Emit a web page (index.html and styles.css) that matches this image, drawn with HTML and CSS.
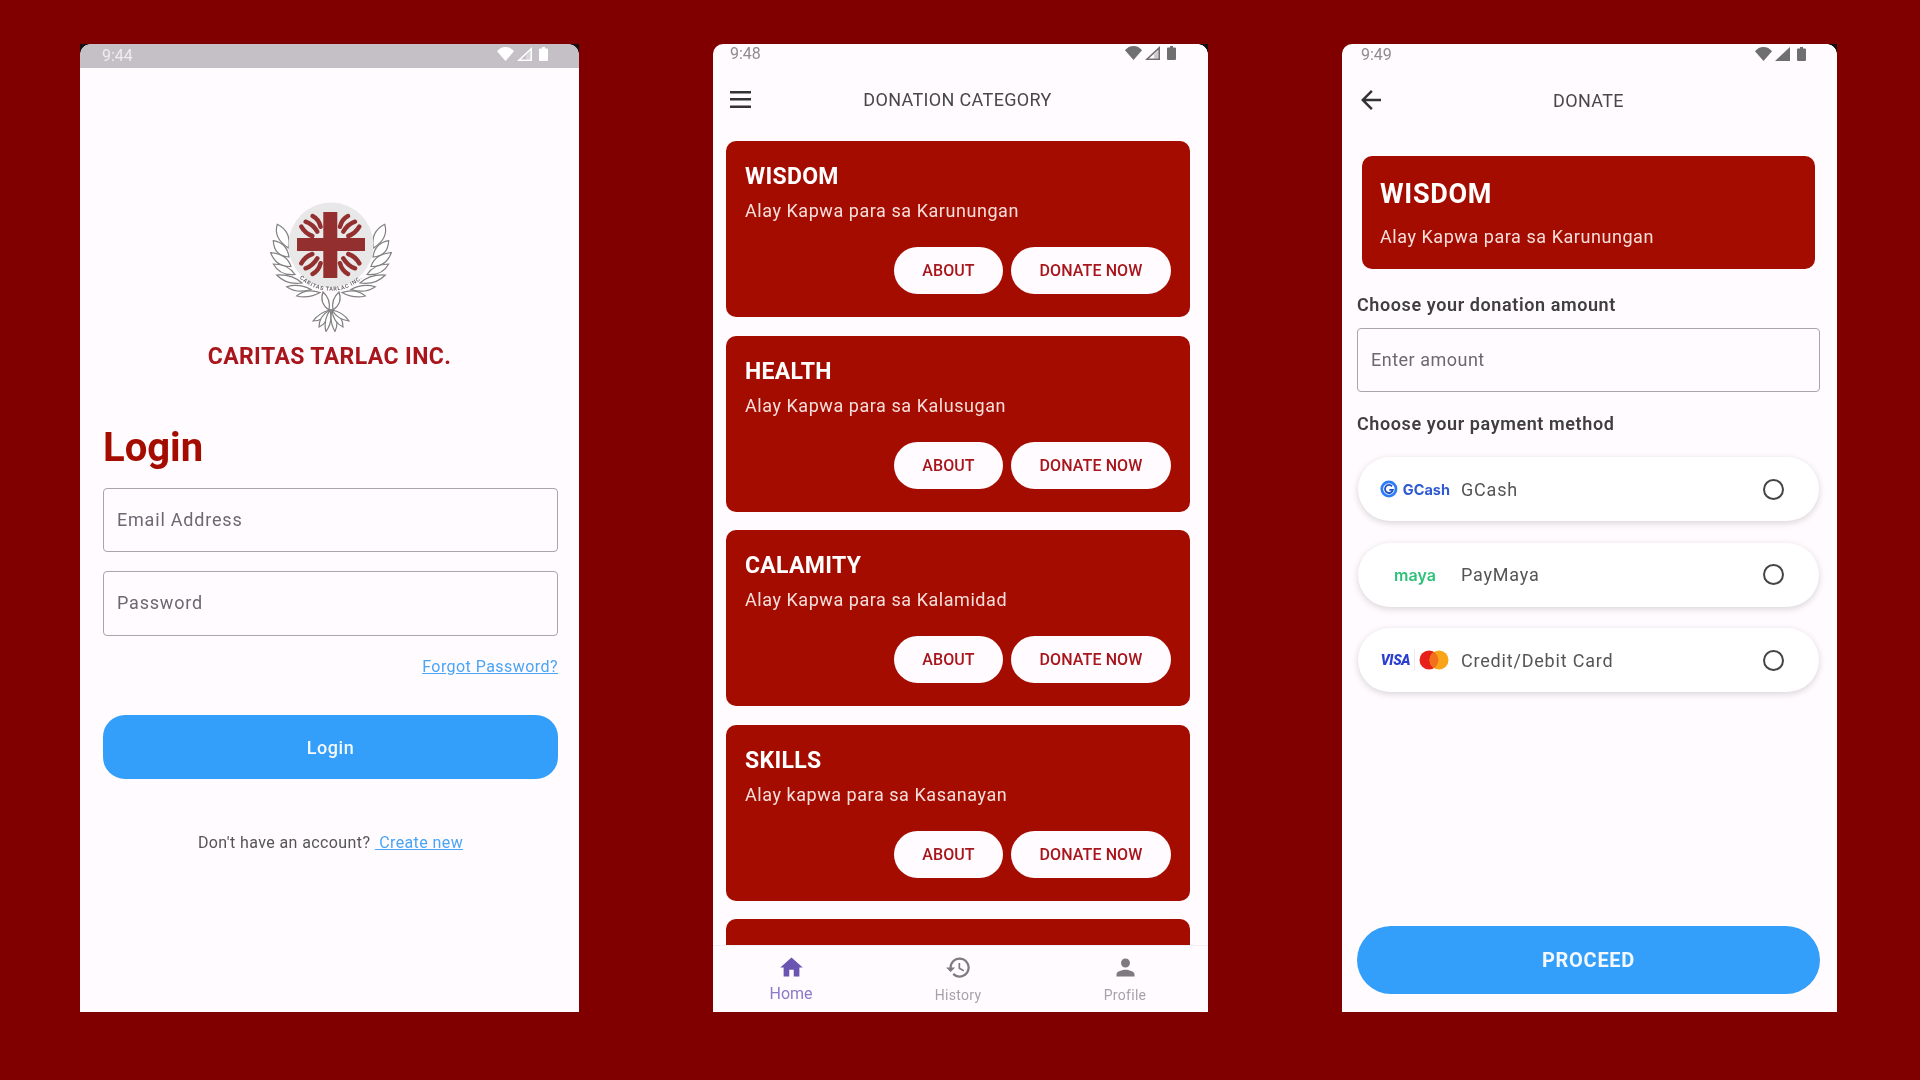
FILE: index.html
```html
<!DOCTYPE html>
<html>
  <head>
    <meta charset="utf-8" />
    <title>Caritas Tarlac</title>
    <link rel="stylesheet" href="styles.css" />
  </head>
  <body>
    <svg class="sprite" width="0" height="0">
      <symbol id="wifi" viewBox="0 0 17 14"><path d="M0 4.2C2.2 1.6 5.2 0 8.5 0s6.3 1.6 8.5 4.2L8.5 14z" /></symbol>
      <symbol id="signal-open" viewBox="0 0 15 14"><path d="M15 0v14H0zM13.4 3.8 3.8 12.6h9.6z" fill-rule="evenodd" /><path d="M9 8.6v4h4.4V4.4z" opacity=".35" /></symbol>
      <symbol id="signal-full" viewBox="0 0 15 14"><path d="M15 0v14H0z" /></symbol>
      <symbol id="battery" viewBox="0 0 9 14"><path d="M3 0h3v1.5h2A1 1 0 0 1 9 2.5V13a1 1 0 0 1-1 1H1a1 1 0 0 1-1-1V2.5a1 1 0 0 1 1-1h2z" /></symbol>
    </svg>

    <div class="phones">
      <!-- Login -->
      <div class="phone login">
        <div class="status status-grey">
          <span>9:44</span>
          <div class="status-icons">
            <svg class="ico-wifi"><use href="#wifi" /></svg>
            <svg class="ico-signal"><use href="#signal-open" /></svg>
            <svg class="ico-battery"><use href="#battery" /></svg>
          </div>
        </div>

        <svg class="logo" viewBox="0 0 124 130">
          <g id="wing" fill="#fff" stroke="#808080" stroke-width="1.2">
            <path d="M7.3 22.3Q3 36 18.3 46Q22 30 7.3 22.3z" />
            <path d="M3.3 38.700Q4 54 19 55Q17 41 3.3 38.700z" />
            <path d="M.7 50.700Q6 65 21 64.500Q17 52 .7 50.700z" />
            <path d="M3.3 62Q10 74 25 72.500Q18 62 3.3 62z" />
            <path d="M6.7 73Q16 83 32 81Q22 72 6.7 73z" />
            <path d="M16.7 84.700Q27 92 41 87.500Q29 81 16.700 84.700z" />
            <path d="M26.7 94Q38 97 50 90.500Q36 86 26.700 94z" />
          </g>
          <use href="#wing" transform="matrix(-1 0 0 1 122 0)" />
          <g fill="#fff" stroke="#808080" stroke-width="1.2">
            <path d="M53 90Q49 101 59 108Q61 97 53 90z" />
            <path d="M69 90Q73 101 63 108Q61 97 69 90z" />
            <path d="M60 108Q50 110 43 119Q54 119 60 108z" />
            <path d="M60 108Q49 114 49 125Q58 121 60 108z" />
            <path d="M60 108Q53 119 56 129.500Q63 120 60 108z" />
            <path d="M62 108Q59 119 65 129.500Q70 119 62 108z" />
            <path d="M62 108Q63 120 73 125Q73 114 62 108z" />
            <path d="M62 108Q68 118 79 119Q73 110 62 108z" />
          </g>
          <circle cx="61" cy="43" r="42.500" fill="#e8e8e8" />
          <g fill="none" stroke="#93302f" stroke-width="4.500" stroke-linecap="round">
            <path id="flame-tr" d="M70 24.700Q72 17 78 14M73.300 29.700Q78 22 85 19.700M78.300 34Q85 32 89.300 24.700" />
            <use href="#flame-tr" transform="matrix(-1 0 0 1 120.600 0)" />
            <use href="#flame-tr" transform="matrix(1 0 0 -1 0 86)" />
            <use href="#flame-tr" transform="matrix(-1 0 0 -1 120.600 86)" />
          </g>
          <path d="M53.300 10h14v26h27.700v13H67.300v27h-14V49H27V36h26.300z" fill="#93302f" />
          <path id="arc" d="M19 60A45 45 0 0 0 103 60" fill="none" />
          <text class="logo-text"><textPath href="#arc" startOffset="50%" text-anchor="middle">CARITAS TARLAC INC.</textPath></text>
        </svg>

        <div class="org">CARITAS TARLAC INC.</div>

        <form class="login-form">
          <h1>Login</h1>
          <input class="field field-email" type="text" placeholder="Email Address" />
          <input class="field field-password" type="password" placeholder="Password" />
          <a class="forgot" href="#">Forgot Password?</a>
          <button class="btn-login" type="button">Login</button>
          <p class="signup">Don't have an account? <a href="#">&nbsp;Create new</a></p>
        </form>
      </div>

      <!-- Donation category -->
      <div class="phone category">
        <div class="status status-tight">
          <span>9:48</span>
          <div class="status-icons">
            <svg class="ico-wifi"><use href="#wifi" /></svg>
            <svg class="ico-signal"><use href="#signal-open" /></svg>
            <svg class="ico-battery"><use href="#battery" /></svg>
          </div>
        </div>

        <div class="appbar">
          <svg class="menu" viewBox="0 0 21 17" fill="#333">
            <rect width="21" height="2.500" />
            <rect y="7" width="21" height="2.500" />
            <rect y="14.500" width="21" height="2.500" />
          </svg>
          <span>DONATION CATEGORY</span>
        </div>

        <div class="list">
          <div class="card">
            <h3>WISDOM</h3>
            <p>Alay Kapwa para sa Karunungan</p>
            <div class="actions"><a class="pill pill-about">ABOUT</a><a class="pill pill-donate">DONATE NOW</a></div>
          </div>
          <div class="card">
            <h3>HEALTH</h3>
            <p>Alay Kapwa para sa Kalusugan</p>
            <div class="actions"><a class="pill pill-about">ABOUT</a><a class="pill pill-donate">DONATE NOW</a></div>
          </div>
          <div class="card">
            <h3>CALAMITY</h3>
            <p>Alay Kapwa para sa Kalamidad</p>
            <div class="actions"><a class="pill pill-about">ABOUT</a><a class="pill pill-donate">DONATE NOW</a></div>
          </div>
          <div class="card">
            <h3>SKILLS</h3>
            <p>Alay kapwa para sa Kasanayan</p>
            <div class="actions"><a class="pill pill-about">ABOUT</a><a class="pill pill-donate">DONATE NOW</a></div>
          </div>
          <div class="card"></div>
        </div>

        <div class="nav">
          <div class="nav-item active">
            <svg viewBox="0 0 24 24"><path d="M10 20v-6h4v6h5v-8h3L12 3 2 12h3v8z" /></svg>
            <span>Home</span>
          </div>
          <div class="nav-item">
            <svg viewBox="0 0 24 24"><path d="M13 3c-4.970 0-9 4.030-9 9H1l3.890 3.890.07.14L9 12H6c0-3.870 3.130-7 7-7s7 3.130 7 7-3.130 7-7 7c-1.930 0-3.680-.79-4.940-2.060l-1.420 1.420C8.270 19.990 10.510 21 13 21c4.970 0 9-4.030 9-9s-4.030-9-9-9zm-1 5v5l4.280 2.540.72-1.210-3.500-2.080V8H12z" /></svg>
            <span>History</span>
          </div>
          <div class="nav-item">
            <svg viewBox="0 0 24 24"><path d="M12 12c2.210 0 4-1.790 4-4s-1.790-4-4-4-4 1.790-4 4 1.790 4 4 4zm0 2c-2.670 0-8 1.340-8 4v2h16v-2c0-2.660-5.330-4-8-4z" /></svg>
            <span>Profile</span>
          </div>
        </div>
      </div>

      <!-- Donate -->
      <div class="phone donate">
        <div class="status status-mid">
          <span>9:49</span>
          <div class="status-icons">
            <svg class="ico-wifi"><use href="#wifi" /></svg>
            <svg class="ico-signal"><use href="#signal-full" /></svg>
            <svg class="ico-battery"><use href="#battery" /></svg>
          </div>
        </div>

        <div class="appbar">
          <svg class="back" viewBox="0 0 24 24" fill="#333"><path d="M20 11H7.830l5.590-5.590L12 4l-8 8 8 8 1.410-1.410L7.830 13H20v-2z" /></svg>
          <span>DONATE</span>
        </div>

        <div class="donate-body">
          <div class="hero">
            <h2>WISDOM</h2>
            <p>Alay Kapwa para sa Karunungan</p>
          </div>

          <div class="label label-amount">Choose your donation amount</div>
          <input class="field field-amount" type="text" placeholder="Enter amount" />

          <div class="label label-method">Choose your payment method</div>

          <div class="pay pay-first">
            <div class="pay-logo">
              <svg class="gcash-mark" viewBox="0 0 20 20">
                <circle cx="10" cy="10" r="9.500" fill="#2d7cf6" />
                <circle cx="10" cy="10" r="6.500" fill="#fff" />
                <path d="M13.500 7A4.500 4.500 0 1 0 14.500 11H10.500" fill="none" stroke="#1f4fc4" stroke-width="2" />
              </svg>
              <span class="gcash-word">GCash</span>
            </div>
            <span class="pay-name">GCash</span>
            <span class="radio"></span>
          </div>

          <div class="pay">
            <div class="pay-logo">
              <span class="maya-word">maya</span>
            </div>
            <span class="pay-name">PayMaya</span>
            <span class="radio"></span>
          </div>

          <div class="pay">
            <div class="pay-logo">
              <span class="visa-word">VISA</span>
              <span class="pay-divider"></span>
              <svg class="mc-mark" viewBox="0 0 30 20">
                <circle cx="10" cy="10" r="9.500" fill="#e8201a" />
                <circle cx="20" cy="10" r="9.500" fill="#f9a51a" />
                <path d="M15 2a9.500 9.500 0 0 1 0 16 9.500 9.500 0 0 1 0-16z" fill="#f2701c" />
              </svg>
            </div>
            <span class="pay-name">Credit/Debit Card</span>
            <span class="radio"></span>
          </div>

          <button class="btn-proceed" type="button">PROCEED</button>
        </div>
      </div>
    </div>
  </body>
</html>
```

FILE: styles.css
```css
* {
  box-sizing: border-box;
}

body {
  margin: 0;
  height: 1080px;
  overflow: hidden;
  background-color: #800000;
  font-family: Roboto, "Liberation Sans", sans-serif;
  color: #444;
}

.sprite {
  position: absolute;
}

h1,
h2,
h3,
p {
  margin: 0;
}

/* Three phones side by side */
.phones {
  display: flex;
  gap: 134px;
  padding: 44px 0 0 80px;
}

.phone {
  position: relative;
  display: flex;
  flex-direction: column;
  height: 968px;
  background-color: #fffbff;
  border-radius: 10px 0 0 0;
  filter: blur(0.4px);
}

/* Black screenshot corners behind the rounded display */
.phone::after {
  content: "";
  position: absolute;
  top: 0;
  right: 0;
  width: 10px;
  height: 10px;
  background: radial-gradient(circle at 0 100%, transparent 9.5px, #111 10px);
}

.login {
  width: 499px;
  border-radius: 0;
}

.login::before {
  content: "";
  position: absolute;
  top: 0;
  left: 0;
  width: 10px;
  height: 10px;
  background: radial-gradient(circle at 100% 100%, transparent 9.5px, #111 10px);
}

.category,
.donate {
  width: 495px;
}

/* Status bars */
.status {
  display: flex;
  justify-content: space-between;
  flex-shrink: 0;
  font-size: 16px;
  color: #8d8d8d;
}

.status-icons {
  display: flex;
  fill: #6f6f6f;
}

.status-icons svg {
  height: 14px;
}

.ico-wifi {
  width: 17px;
}

.ico-signal {
  width: 15px;
  margin-left: 3px;
}

.ico-battery {
  width: 9px;
  margin-left: 7px;
}

.status-grey {
  height: 24px;
  padding: 2px 31px 0 22px;
  background-color: #c4c0c6;
  color: #efedf0;
}

.status-grey .status-icons {
  padding-top: 1px;
  fill: #fff;
}

.status-tight {
  height: 18px;
  padding: 0 32px 0 17px;
}

.status-tight .status-icons {
  padding-top: 2px;
}

.status-mid {
  height: 20px;
  padding: 1px 31px 0 19px;
}

.status-mid .status-icons {
  padding-top: 2px;
}

/* Login */
.logo {
  display: block;
  width: 124px;
  height: 130px;
  margin: 134px 0 0 190px;
  flex-shrink: 0;
}

.logo-text {
  font-size: 5.5px;
  font-weight: 500;
  letter-spacing: 0.7px;
  fill: #555;
}

.org {
  margin-top: 11px;
  text-align: center;
  font-size: 23px;
  line-height: 28px;
  font-weight: 700;
  letter-spacing: 0.4px;
  color: #a8151a;
}

.login-form {
  display: flex;
  flex-direction: column;
  padding: 0 21px 0 23px;
}

.login-form h1 {
  margin-top: 53px;
  font-size: 40px;
  line-height: 48px;
  font-weight: 700;
  color: #a50c00;
}

.field {
  display: block;
  width: 100%;
  height: 64px;
  padding: 0 13px 2px;
  border: 1.5px solid #a8a5ab;
  border-radius: 4px;
  background: transparent;
  font-family: inherit;
  font-size: 18px;
  letter-spacing: 0.5px;
  color: #444;
}

.field::placeholder {
  color: #6b686f;
  opacity: 1;
}

.field-email {
  margin-top: 16px;
  letter-spacing: 0.8px;
}

.field-password {
  margin-top: 19px;
  height: 65px;
  letter-spacing: 0.8px;
}

.forgot {
  align-self: flex-end;
  margin-top: 21px;
  font-size: 16px;
  line-height: 20px;
  letter-spacing: 0.45px;
  color: #4aa5f5;
}

.btn-login {
  height: 64px;
  margin-top: 38px;
  border: none;
  border-radius: 22px;
  background-color: #339ffa;
  color: #f4f9ff;
  font-family: inherit;
  font-size: 18px;
  font-weight: 500;
  letter-spacing: 0.6px;
}

.signup {
  margin-top: 54px;
  text-align: center;
  font-size: 16px;
  line-height: 20px;
  letter-spacing: 0.4px;
  color: #555;
}

.signup a {
  color: #4aa5f5;
}

/* App bars */
.appbar {
  position: relative;
  display: flex;
  align-items: center;
  justify-content: center;
  flex-shrink: 0;
  height: 76px;
  padding-bottom: 2px;
  font-size: 18px;
  letter-spacing: 0.35px;
  color: #484848;
}

.category .appbar {
  padding-right: 6px;
}

.donate .appbar {
  height: 74px;
  padding-right: 2px;
}

.menu,
.back {
  position: absolute;
  top: 50%;
}

.menu {
  left: 17px;
  width: 21px;
  height: 17px;
  margin-top: -9px;
}

.back {
  left: 14px;
  width: 30px;
  height: 30px;
  margin-top: -16px;
}

/* Category list */
.list {
  flex: 1;
  display: flex;
  flex-direction: column;
  gap: 18.6px;
  padding: 3px 18px 0 13px;
  overflow: hidden;
}

.card {
  flex-shrink: 0;
  height: 176px;
  padding: 22px 19px 0;
  border-radius: 10px;
  background-color: #a50c00;
  color: #fff;
}

.card h3 {
  padding-top: 1px;
  font-size: 23px;
  line-height: 25px;
  font-weight: 700;
  letter-spacing: 0.3px;
}

.card p {
  margin-top: 10px;
  font-size: 18px;
  line-height: 24px;
  letter-spacing: 0.55px;
  color: #f6dedb;
}

.actions {
  display: flex;
  justify-content: flex-end;
  gap: 8px;
  margin-top: 24px;
}

.pill {
  display: flex;
  align-items: center;
  justify-content: center;
  height: 47px;
  border-radius: 24px;
  background-color: #fffbff;
  font-size: 16px;
  font-weight: 500;
  letter-spacing: 0.1px;
  color: #a8151a;
}

.pill-about {
  width: 109px;
}

.pill-donate {
  width: 160px;
}

/* Bottom nav */
.nav {
  display: flex;
  justify-content: space-between;
  flex-shrink: 0;
  height: 67px;
  padding: 8px 17px 0 12px;
  border-top: 1px solid #f3eff5;
}

.nav-item {
  display: flex;
  flex-direction: column;
  align-items: center;
  width: 132px;
  fill: #7d7b80;
  font-size: 14px;
  line-height: 18px;
  letter-spacing: 0.3px;
  color: #a5a3a8;
}

.nav-item svg {
  width: 27px;
  height: 27px;
  margin-bottom: 5px;
}

.nav-item.active {
  fill: #6a55b0;
  font-size: 16px;
  letter-spacing: 0;
  color: #8b79c9;
}

.nav-item.active svg {
  margin-bottom: 4px;
}

/* Donate */
.donate-body {
  flex: 1;
  display: flex;
  flex-direction: column;
  padding: 18px 17px 18px 15px;
}

.hero {
  height: 113px;
  margin: 0 5px;
  padding: 22px 19px 0 18px;
  border-radius: 10px;
  background-color: #a50c00;
  color: #fff;
}

.hero h2 {
  font-size: 27px;
  line-height: 32px;
  font-weight: 700;
  letter-spacing: 0.7px;
}

.hero p {
  margin-top: 15px;
  font-size: 18px;
  line-height: 24px;
  letter-spacing: 0.55px;
  color: #f6dedb;
}

.label {
  font-size: 18px;
  line-height: 22px;
  font-weight: 600;
  letter-spacing: 0.6px;
  color: #3f3f3f;
}

.label-amount {
  margin-top: 25px;
}

.field-amount {
  margin-top: 12px;
}

.label-method {
  margin-top: 21px;
}

.pay {
  display: flex;
  align-items: center;
  height: 64px;
  margin: 21.5px 1px 0;
  padding: 0 35px 0 22px;
  border-radius: 32px;
  background-color: #fff;
  box-shadow: 0 2px 7px rgba(0, 0, 0, 0.16);
  font-size: 18px;
  letter-spacing: 0.8px;
  color: #555;
}

.pay-first {
  margin-top: 22px;
}

.pay-logo {
  display: flex;
  align-items: center;
  justify-content: center;
  width: 70px;
  margin-right: 11px;
  flex-shrink: 0;
  letter-spacing: 0;
}

.pay-name {
  flex: 1;
}

.gcash-mark {
  width: 18px;
  height: 18px;
  margin-right: 5px;
}

.gcash-word {
  font-family: Inter, Roboto, sans-serif;
  font-size: 14.5px;
  font-weight: 700;
  color: #2f5bd0;
}

.maya-word {
  font-family: Inter, Roboto, sans-serif;
  font-size: 16px;
  font-weight: 600;
  color: #2fc07a;
}

.visa-word {
  font-size: 14px;
  font-weight: 900;
  font-style: italic;
  letter-spacing: -0.3px;
  color: #2a3ed0;
}

.pay-divider {
  width: 1px;
  height: 22px;
  margin: 0 4px;
  background-color: #eeeaf0;
}

.mc-mark {
  width: 30px;
  height: 20px;
}

.radio {
  width: 21px;
  height: 21px;
  border: 2px solid #444;
  border-radius: 50%;
}

.btn-proceed {
  height: 68px;
  margin-top: auto;
  border: none;
  border-radius: 34px;
  background-color: #339ffa;
  color: #f4f9ff;
  font-family: inherit;
  font-size: 20px;
  font-weight: 700;
  letter-spacing: 0.7px;
}
```
